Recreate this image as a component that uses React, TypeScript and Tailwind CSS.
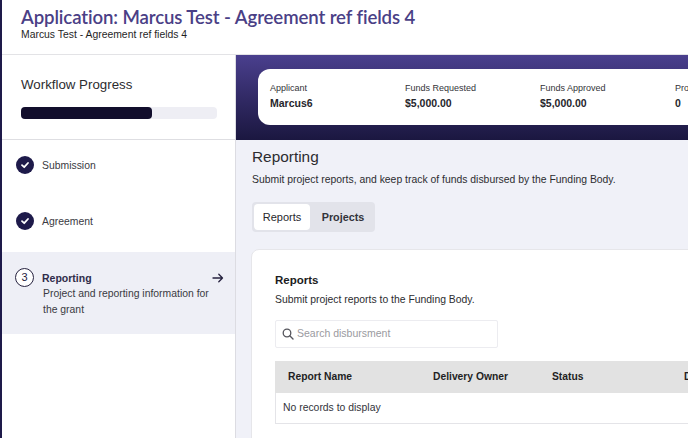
import React from "react";

const sans = "font-['Liberation_Sans',Arial,sans-serif]";

function Check() {
  return (
    <div className="w-[18px] h-[18px] rounded-full bg-[#1e1a4a] flex items-center justify-center shrink-0">
      <svg width="10" height="10" viewBox="0 0 10 10" fill="none">
        <path d="M2 5.2 L4.2 7.2 L8 3" stroke="#fff" strokeWidth="1.8" strokeLinecap="round" strokeLinejoin="round" />
      </svg>
    </div>
  );
}

function Stat({ label, value, w }: { label: string; value: string; w: string }) {
  return (
    <div className={`${w} shrink-0`}>
      <div className="text-[9px] leading-[12px] text-[#333338]">{label}</div>
      <div className="text-[10.5px] leading-[14px] font-bold text-[#26262c] mt-[2px]">{value}</div>
    </div>
  );
}

export default function App() {
  return (
    <div className={`w-[688px] h-[438px] overflow-hidden bg-white border-l-2 border-[#1e1a4a] flex flex-col ${sans}`}>
      <header className="h-[55px] shrink-0 border-b border-[#e3e3e6] pl-[19px] pt-[6px]">
        <h1 className="font-['Lato',sans-serif] font-semibold text-[18.6px] leading-[22px] text-[#4a4086] tracking-[-0.1px] whitespace-nowrap">
          Application: Marcus Test - Agreement ref fields 4
        </h1>
        <p className="text-[10.4px] leading-[12px] mt-[1px] text-[#1f1f1f]">Marcus Test - Agreement ref fields 4</p>
      </header>

      <div className="flex flex-1 min-h-0">
        <aside className="w-[234px] shrink-0 border-r border-[#dcdce2] flex flex-col">
          <div className="h-[85px] shrink-0 border-b border-[#dedee2] pl-[19px] pr-[17px] pt-[22px]">
            <div className="text-[13.3px] leading-[16px] text-[#2c2c30]">Workflow Progress</div>
            <div className="mt-[14px] h-[12px] rounded-[4px] bg-[#eeeef4] w-[196px]">
              <div className="h-full w-[131px] rounded-[4px] bg-[#120e2c]" />
            </div>
          </div>

          <div className="flex items-center gap-[8px] pl-[14px] h-[56px] pb-[6px]">
            <Check />
            <span className="text-[10.4px] text-[#3a3a42] pt-[1px]">Submission</span>
          </div>
          <div className="flex items-center gap-[8px] pl-[14px] h-[56px] pb-[6px]">
            <Check />
            <span className="text-[10.4px] text-[#3a3a42] pt-[1px]">Agreement</span>
          </div>

          <div className="bg-[#eeeff6] h-[82px] pl-[13px] pr-[11px] pt-[16px] flex gap-[8px]">
            <div className="w-[19px] h-[19px] rounded-full border border-[#26223f] flex items-center justify-center text-[11px] text-[#26223f] shrink-0 bg-white">
              3
            </div>
            <div className="flex-1 min-w-0">
              <div className="flex items-center justify-between h-[18px] mt-[1px]">
                <span className="text-[10.5px] font-bold text-[#2f2c4a] pt-[1px]">Reporting</span>
                <svg width="12" height="12" viewBox="0 0 12 12" fill="none">
                  <path d="M1 6 H10.5 M6.8 2.2 L10.5 6 L6.8 9.8" stroke="#26223f" strokeWidth="1.3" strokeLinecap="round" strokeLinejoin="round" />
                </svg>
              </div>
              <p className="text-[10.4px] leading-[15.5px] text-[#3a3a42] pl-[1px] mt-[-1px]">
                Project and reporting information for the grant
              </p>
            </div>
          </div>
        </aside>

        <main className="flex-1 min-w-0 bg-[#f0f1f8] flex flex-col overflow-hidden">
          <div className="h-[85px] shrink-0 bg-gradient-to-b from-[#4a3f8e] to-[#1b1740] pt-[14px] pl-[22px]">
            <div className="w-[500px] h-[56px] rounded-[12px] bg-white flex items-center pl-[12px] pb-[2px]">
              <Stat label="Applicant" value="Marcus6" w="w-[135px]" />
              <Stat label="Funds Requested" value="$5,000.00" w="w-[135px]" />
              <Stat label="Funds Approved" value="$5,000.00" w="w-[135px]" />
              <Stat label="Project" value="0" w="w-[60px]" />
            </div>
          </div>

          <div className="pl-[16px] pt-[8px] flex-1 min-h-0">
            <h2 className="text-[15.4px] leading-[18px] text-[#2c2c30]">Reporting</h2>
            <p className="text-[10.4px] leading-[13px] text-[#2c2c30] mt-[7px] whitespace-nowrap">
              Submit project reports, and keep track of funds disbursed by the Funding Body.
            </p>

            <div className="mt-[16px] inline-flex h-[30px] rounded-[4px] bg-[#e2e3ea] p-[2px] align-top">
              <div className="w-[56px] rounded-[4px] bg-white flex items-center justify-center text-[11px] font-medium text-[#26262c]">Reports</div>
              <div className="w-[63px] pl-[3px] flex items-center justify-center text-[10.8px] font-bold text-[#33333a]">Projects</div>
            </div>

            <section className="mt-[17px] ml-[-1px] w-[600px] h-[300px] bg-white border border-[#e6e6ea] rounded-[8px] pl-[23px] pt-[23px]">
              <h3 className="text-[11.5px] leading-[14px] font-bold text-[#1c1c22]">Reports</h3>
              <p className="text-[10.4px] leading-[13px] text-[#2c2c30] mt-[6px]">Submit project reports to the Funding Body.</p>

              <div className="mt-[14px] w-[223px] h-[28px] border border-[#ececf0] rounded-[2px] flex items-center pl-[6px] gap-[3px]">
                <svg width="12" height="12" viewBox="0 0 12 12" fill="none">
                  <circle cx="5" cy="5" r="3.8" stroke="#55555c" strokeWidth="1.3" />
                  <path d="M8 8 L11 11" stroke="#55555c" strokeWidth="1.4" strokeLinecap="round" />
                </svg>
                <span className="text-[10.5px] text-[#9a9aa0]">Search disbursment</span>
              </div>

              <div className="mt-[13px] h-[32px] bg-[#e2e2e2] flex items-center text-[10.3px] font-bold text-[#1f1f24]">
                <span className="w-[158px] pl-[13px] shrink-0">Report Name</span>
                <span className="w-[119px] shrink-0">Delivery Owner</span>
                <span className="w-[132px] shrink-0">Status</span>
                <span>Date</span>
              </div>
              <div className="h-[31px] border-b border-l border-[#e4e4e8] flex items-center pl-[7px] text-[10.4px] text-[#33333a]">
                No records to display
              </div>
            </section>
          </div>
        </main>
      </div>
    </div>
  );
}
